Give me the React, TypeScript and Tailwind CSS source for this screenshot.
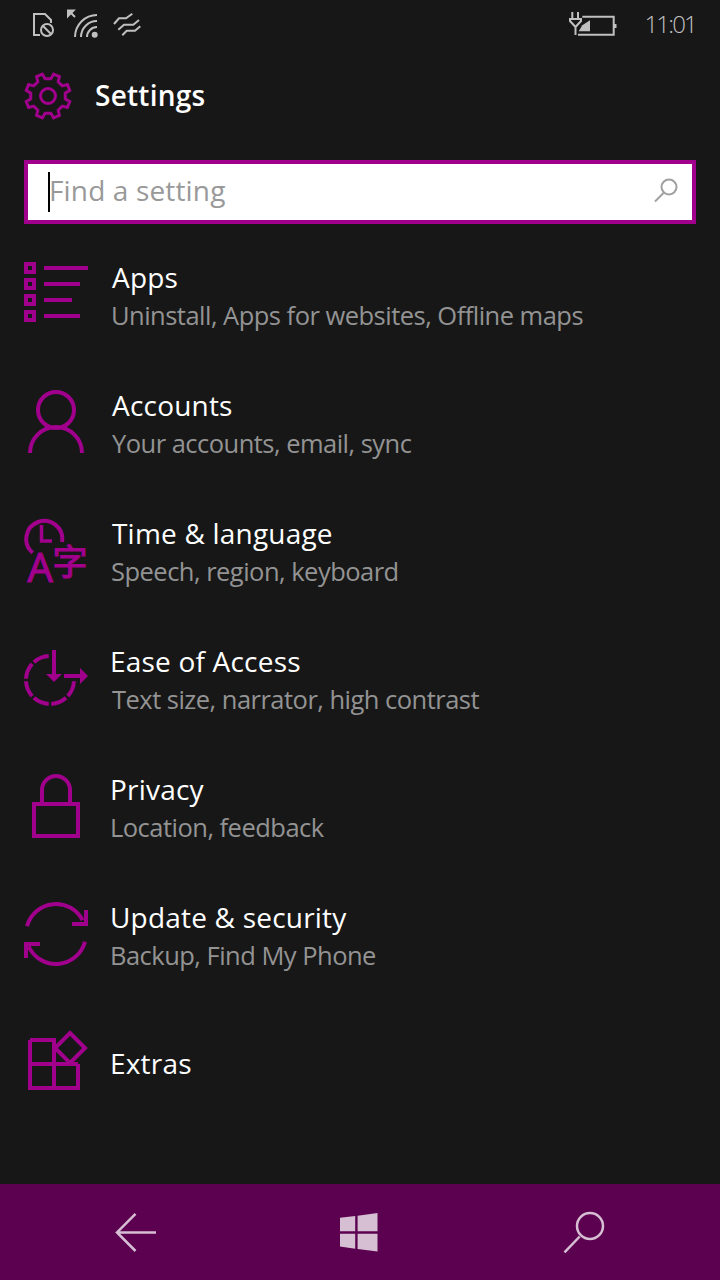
import React from 'react';

const ACCENT = '#a0008c';

function arcPath(cx: number, cy: number, r: number, from: number, to: number) {
  const rad = (d: number) => (d * Math.PI) / 180;
  const x1 = cx + r * Math.cos(rad(from));
  const y1 = cy + r * Math.sin(rad(from));
  const x2 = cx + r * Math.cos(rad(to));
  const y2 = cy + r * Math.sin(rad(to));
  return `M${x1} ${y1}A${r} ${r} 0 0 1 ${x2} ${y2}`;
}

function gearPoints(cx: number, cy: number) {
  const pts: string[] = [];
  for (let i = 0; i < 8; i++) {
    const a = 22.5 + i * 45 - 90;
    const spots: [number, number][] = [
      [a - 13, 17.5],
      [a - 8, 22.5],
      [a + 8, 22.5],
      [a + 13, 17.5],
    ];
    for (const [d, r] of spots) {
      const t = (d * Math.PI) / 180;
      pts.push(`${cx + r * Math.cos(t)},${cy + r * Math.sin(t)}`);
    }
  }
  return pts.join(' ');
}

function RowSvg({ children }: { children: React.ReactNode }) {
  return (
    <svg width="64" height="128" viewBox="0 0 64 128" fill="none" stroke={ACCENT} strokeWidth="4" className="shrink-0">
      {children}
    </svg>
  );
}

function AppsIcon() {
  return (
    <RowSvg>
      {[14, 30, 46, 62].map((y) => (
        <rect key={y} x="2" y={y + 2} width="8" height="8" />
      ))}
      <path d="M20 20H64M20 36H56M20 52H48M20 68H56" />
    </RowSvg>
  );
}

function AccountsIcon() {
  return (
    <RowSvg>
      <circle cx="32" cy="34" r="18" />
      <path d="M6 77A26 26 0 0 1 58 77" />
    </RowSvg>
  );
}

function TimeIcon() {
  return (
    <RowSvg>
      <path d="M8.7 48.7A18 18 0 1 1 38 38" />
      <path d="M17.5 21V37H28" strokeWidth="3.5" />
      <text x="3.5" y="78" fontSize="40" fill={ACCENT} stroke={ACCENT} strokeWidth="1.2" fontFamily="'Open Sans', sans-serif">A</text>
      <text x="28.5" y="71" fontSize="35" fill={ACCENT} stroke={ACCENT} strokeWidth="1.2" fontFamily="'Noto Sans CJK SC', sans-serif">字</text>
    </RowSvg>
  );
}

function EaseIcon() {
  const segments = [0, 45, 90, 135, 180, 225];
  return (
    <RowSvg>
      {segments.map((a) => (
        <path key={a} d={arcPath(26, 48, 24, a + 3, a + 42)} />
      ))}
      <path d="M30 18V44M40 44H56" />
      <path d="M22 42H38L30 50ZM56 36V52L64 44Z" fill={ACCENT} stroke="none" />
    </RowSvg>
  );
}

function PrivacyIcon() {
  return (
    <RowSvg>
      <rect x="10" y="44" width="44" height="32" />
      <path d="M18 42V30A14 14 0 0 1 46 30V42" />
    </RowSvg>
  );
}

function UpdateIcon() {
  return (
    <RowSvg>
      <path d={arcPath(32, 46, 30, 195, 332.6)} />
      <path d="M62 22V36H48" />
      <path d={arcPath(32, 46, 30, 15, 156)} />
      <path d="M2 70V56H16" />
    </RowSvg>
  );
}

function ExtrasIcon() {
  return (
    <RowSvg>
      <path d="M6 24H30V72M6 48H54M6 24V72H54V48" />
      <path d="M46 17L61 32L46 47L31 32Z" />
    </RowSvg>
  );
}

const rows = [
  { title: 'Apps', sub: 'Uninstall, Apps for websites, Offline maps', Icon: AppsIcon, titleX: 'ml-[3px]', subX: 'ml-[2px]' },
  { title: 'Accounts', sub: 'Your accounts, email, sync', Icon: AccountsIcon, titleX: 'ml-[3px]', subX: 'ml-[3px]' },
  { title: 'Time & language', sub: 'Speech, region, keyboard', Icon: TimeIcon, titleX: 'ml-[3px]', subX: 'ml-[2px]' },
  { title: 'Ease of Access', sub: 'Text size, narrator, high contrast', Icon: EaseIcon, titleX: 'ml-[1px]', subX: 'ml-[3px]' },
  { title: 'Privacy', sub: 'Location, feedback', Icon: PrivacyIcon, titleX: 'ml-[1px]', subX: 'ml-[1px]' },
  { title: 'Update & security', sub: 'Backup, Find My Phone', Icon: UpdateIcon, titleX: 'ml-[1px]', subX: 'ml-[1px]' },
  { title: 'Extras', sub: '', Icon: ExtrasIcon, titleX: 'ml-[1px]', subX: 'ml-0' },
];

function StatusBar() {
  return (
    <div className="h-[48px] flex items-center pl-[30px] pr-[24px] text-[#c0c0c0]">
      <svg width="26" height="28" viewBox="0 0 26 28" fill="none" stroke="currentColor" strokeWidth="2">
        <path d="M10 25H4V4H15L21 10V13" />
        <circle cx="17" cy="20" r="6" />
        <path d="M13 16L21 24" />
      </svg>
      <svg width="34" height="30" viewBox="0 0 34 30" fill="none" stroke="currentColor" strokeWidth="2" className="ml-[10px]">
        <path d="M9 8L3.5 2.5" />
        <path d="M2 7V1.5H7.5Z" fill="currentColor" />
        <path d="M9 28A22 22 0 0 1 31 6M15 28A16 16 0 0 1 31 12M21 28A10 10 0 0 1 31 18" />
        <circle cx="28.7" cy="25.7" r="3" fill="currentColor" stroke="none" />
      </svg>
      <svg width="30" height="26" viewBox="0 0 30 26" fill="none" stroke="currentColor" strokeWidth="2" className="ml-[12px]">
        <path d="M2 13L7 7.3H14L20.3 2.7M6.3 18.7L12 13.7H21.3L27 9M10.3 24.3L14.7 19.7H23L28.3 15.3" />
      </svg>
      <svg width="50" height="28" viewBox="0 0 50 28" fill="none" stroke="currentColor" strokeWidth="2" className="ml-auto">
        <path d="M4.3 2V9M10 2V9" />
        <path d="M2 9V11L7.5 17L13 11V9ZM7.5 17V25" />
        <path d="M14.3 6.7H45.7V24.7H10" />
        <path d="M22 10.3V21.3H10.7L14.3 15.3Z" fill="currentColor" stroke="none" />
        <rect x="46" y="14" width="2.5" height="4" fill="currentColor" stroke="none" />
      </svg>
      <span className="ml-[26px] text-[24px] font-light leading-none tracking-[-1.8px]">11:01</span>
    </div>
  );
}

export default function App() {
  return (
    <div className="h-[1280px] w-[720px] flex flex-col bg-[#171717] font-['Open_Sans',sans-serif] overflow-hidden">
      <StatusBar />

      <div className="h-[96px] flex items-center pl-[24px]">
        <svg width="48" height="48" viewBox="0 0 48 48" fill="none" stroke={ACCENT} strokeWidth="3">
          <polygon points={gearPoints(24, 24)} />
          <circle cx="24" cy="24" r="7.5" />
        </svg>
        <span className="ml-[23px] -mt-[2px] text-[28px] font-semibold text-white tracking-[0.25px]">Settings</span>
      </div>

      <div className="mt-[16px] mx-[24px] h-[64px] border-4 border-[#a0008c] bg-white flex items-center pl-[20px] pr-[11px]">
        <div className="w-[2px] h-[40px] bg-black" />
        <span className="-ml-[1px] -mt-[4px] text-[28px] text-[#999999] tracking-[0.15px] font-[370]">Find a setting</span>
        <svg width="30" height="30" viewBox="0 0 30 30" fill="none" stroke="#a0a0a0" strokeWidth="2" className="ml-auto -mt-[2px]">
          <circle cx="18" cy="11" r="7.5" />
          <path d="M12.5 17L4 25.5" />
        </svg>
      </div>

      <div className="mt-[24px]">
        {rows.map(({ title, sub, Icon, titleX, subX }) => (
          <div key={title} className="h-[128px] flex pl-[24px]">
            <Icon />
            <div className={sub ? 'ml-[21px] pt-[10px]' : 'ml-[21px] pt-[28px]'}>
              <div className={`${titleX} text-[28px] leading-[38px] text-white tracking-[0.2px] font-[370]`}>{title}</div>
              {sub && <div className={`${subX} mt-[1px] text-[25.5px] leading-[36px] text-[#939393] font-[370] tracking-[-0.52px]`}>{sub}</div>}
            </div>
          </div>
        ))}
      </div>

      <div className="mt-auto h-[96px] bg-[#5c0050] flex items-center text-[#d6bfd3]">
        <svg width="44" height="44" viewBox="0 0 44 44" fill="none" stroke="currentColor" strokeWidth="2.5" className="ml-[114px]">
          <path d="M21.5 3.8L3 22.4L21.5 41M3 22.4H42" />
        </svg>
        <svg width="38" height="39" viewBox="0 0 38 39" fill="currentColor" className="ml-[182px]">
          <path d="M0 4.8L15.2 3.1V18.2H0ZM17.6 2.8L37.5 0V18.2H17.6ZM0 20.7H15.2V35.8L0 33.4ZM17.6 20.7H37.5V38.6L17.6 36Z" />
        </svg>
        <svg width="46" height="46" viewBox="0 0 46 46" fill="none" stroke="currentColor" strokeWidth="2.5" className="ml-[184px]">
          <circle cx="28" cy="17" r="13" />
          <path d="M17.7 27.5L2.5 43.4" />
        </svg>
      </div>
    </div>
  );
}
